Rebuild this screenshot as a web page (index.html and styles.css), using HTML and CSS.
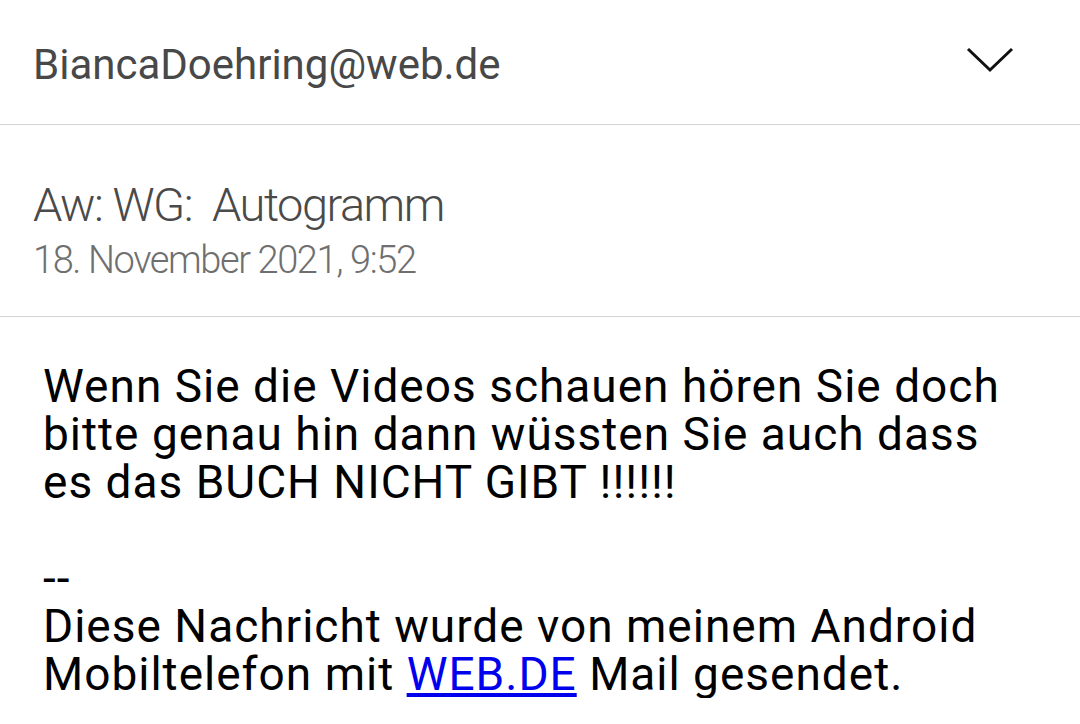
FILE: index.html
```html
<!DOCTYPE html>
<html lang="de">
<head>
  <meta charset="UTF-8" />
  <meta name="viewport" content="width=device-width, initial-scale=1.0"/>
  <title>Aw: WG: Autogramm</title>
  <link rel="stylesheet" href="styles.css">
</head>
<body>
  <header class="sender">
    <span class="address">BiancaDoehring@web.de</span>
    <svg class="chevron" width="48" height="26" viewBox="0 0 48 26">
      <polyline points="2,2 24,23 46,2" fill="none" stroke="#111" stroke-width="3"/>
    </svg>
  </header>

  <section class="meta">
    <h1 class="subject">Aw: WG:&nbsp; Autogramm</h1>
    <div class="date">18. November 2021, 9:52</div>
  </section>

  <main class="message">
    <p>Wenn Sie die Videos schauen hören Sie doch bitte genau hin dann wüssten Sie auch dass es das BUCH NICHT GIBT !!!!!!</p>
    <p class="blank">&nbsp;</p>
    <p>--<br>Diese Nachricht wurde von meinem Android Mobiltelefon mit <a href="#">WEB.DE</a> Mail gesendet.</p>
  </main>
</body>
</html>
```

FILE: styles.css
```css
body {
  margin: 0;
  background: #ffffff;
  font-family: Roboto, 'Noto Sans', sans-serif;
  color: #000;
}
.sender {
  display: flex;
  align-items: center;
  justify-content: space-between;
  height: 124px;
  padding: 0 66px 0 33px;
  border-bottom: 1px solid #d4d4d4;
}
.address {
  font-size: 42px;
  color: #484848;
  margin-top: 4px;
}
.chevron {
  display: block;
  margin-top: -4px;
}
.meta {
  height: 192px;
  padding: 50px 33px 0 33px;
  border-bottom: 1px solid #d4d4d4;
  box-sizing: border-box;
}
.subject {
  margin: 0;
  font-size: 47px;
  font-weight: 300;
  color: #4a4a4a;
  line-height: 60px;
  letter-spacing: -1.5px;
}
.date {
  font-size: 38px;
  font-weight: 300;
  color: #6f6f6f;
  line-height: 50px;
  letter-spacing: -1.4px;
}
.message {
  padding: 45px 43px 0 43px;
  font-size: 46px;
  line-height: 48px;
  letter-spacing: 1px;
}
.message p {
  margin: 0;
}
a {
  color: #0000ee;
}
```
